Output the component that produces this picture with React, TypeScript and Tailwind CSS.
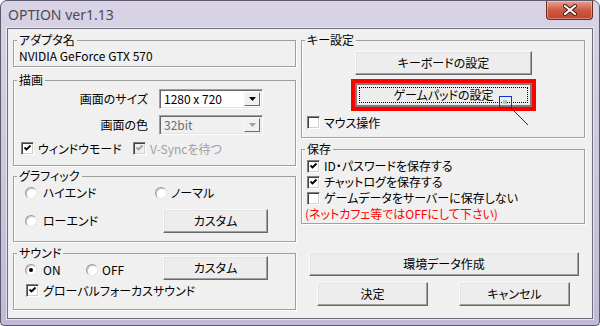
import React from 'react';

const font = "font-['Noto_Sans_CJK_JP','Noto_Sans',sans-serif] [font-feature-settings:'palt']";

function Group({ label, className = '', children }: { label: string; className?: string; children?: React.ReactNode }) {
  return (
    <fieldset className={`border border-[#a0a0a0] shadow-[inset_1px_0_0_#fff,1px_1px_0_#fff] min-w-0 ${className}`}>
      <legend className="ml-[3px] px-[2px] leading-[14px] bg-[#f0f0f0]">{label}</legend>
      {children}
    </fieldset>
  );
}

function Check({ checked = false, disabled = false }: { checked?: boolean; disabled?: boolean }) {
  return (
    <span
      className={`w-[13px] h-[13px] shrink-0 flex items-center justify-center border border-t-[#808080] border-l-[#808080] border-b-white border-r-white shadow-[inset_1px_1px_0_#404040,inset_-1px_-1px_0_#d4d0c8] ${
        disabled ? 'bg-[#f0f0f0]' : 'bg-white'
      }`}
    >
      {checked && (
        <svg width="9" height="9" viewBox="0 0 9 9">
          <path d="M1.5 3.5 L3.5 5.5 L7.5 1.5" fill="none" stroke={disabled ? '#a0a0a0' : '#000'} strokeWidth="1.8" />
        </svg>
      )}
    </span>
  );
}

function Radio({ on = false }: { on?: boolean }) {
  return (
    <span className="w-[12px] h-[12px] shrink-0 rounded-full flex items-center justify-center bg-white border border-t-[#9a9a9a] border-l-[#9a9a9a] border-b-[#e8e8e8] border-r-[#e8e8e8] shadow-[inset_1px_1px_0_#c8c8c8]">
      {on && <span className="w-[4px] h-[4px] rounded-full bg-black" />}
    </span>
  );
}

function Btn({ children, className = '' }: { children: React.ReactNode; className?: string }) {
  return (
    <div
      className={`h-[24px] shrink-0 flex items-center justify-center bg-[#ededed] border border-t-[#f8f8f8] border-l-[#f8f8f8] border-r-[#696969] border-b-[#696969] shadow-[inset_-1px_-1px_0_#a0a0a0,inset_1px_1px_0_#e3e3e3] leading-[14px] whitespace-nowrap ${className}`}
    >
      {children}
    </div>
  );
}

function Select({ value, disabled = false }: { value: string; disabled?: boolean }) {
  return (
    <div
      className={`w-[104px] h-[20px] flex items-center p-[2px] border border-t-[#a0a0a0] border-l-[#a0a0a0] border-r-white border-b-white shadow-[inset_1px_1px_0_#696969,inset_-1px_-1px_0_#e3e3e3] ${
        disabled ? 'bg-[#f0f0f0] text-[#6d6d6d]' : 'bg-white'
      }`}
    >
      <span className="flex-1 pl-[2px] leading-[14px]">{value}</span>
      <span className="w-[16px] h-[14px] flex items-center justify-center bg-[#f0f0f0] border border-t-[#f8f8f8] border-l-[#f8f8f8] border-r-[#696969] border-b-[#696969]">
        <svg width="7" height="4" viewBox="0 0 7 4">
          <path d="M0 0 H7 L3.5 4 Z" fill={disabled ? '#a0a0a0' : '#000'} />
        </svg>
      </span>
    </div>
  );
}

export default function App() {
  return (
    <div className={`relative w-[600px] h-[326px] overflow-hidden bg-white text-[12px] text-black whitespace-nowrap ${font}`}>
      <div className="w-[600px] h-[326px] flex flex-col border border-[#5c5a6e] rounded-t-[7px] rounded-b-[4px] bg-gradient-to-b from-[#d9d3e5] via-[#cec7de] to-[#c2b9d6]">
        {/* title bar */}
        <div className="h-[27px] flex justify-between items-start pr-[6px]">
          <span className="mt-[5px] ml-[7px] leading-[18px] text-[14px] text-[#4a4a55] font-['Noto_Sans',sans-serif]">
            OPTION ver1.13
          </span>
          <div className="w-[47px] h-[19px] flex items-center justify-center rounded-b-[4px] border border-t-0 border-[#6b2a22] bg-gradient-to-b from-[#e3a293] via-[#cf5a43] to-[#c4432c] shadow-[inset_0_0_0_1px_rgba(255,255,255,0.35)]">
            <svg width="14" height="12" viewBox="0 0 14 12">
              <path d="M2 2 L12 10 M12 2 L2 10" stroke="#3b1612" strokeWidth="4" strokeLinecap="square" />
              <path d="M2 2 L12 10 M12 2 L2 10" stroke="#fff" strokeWidth="2" strokeLinecap="square" />
            </svg>
          </div>
        </div>

        {/* client area */}
        <div className="w-[586px] h-[291px] mx-[6px] border border-[#6e6e7a] bg-[#f0f0f0] shadow-[0_0_0_1px_rgba(255,255,255,0.55)] flex gap-[5px] pl-[5px] pt-[4px]">
          {/* left column */}
          <div className="w-[283px] flex flex-col">
            <Group label="アダプタ名" className="h-[34px]">
              <div className="pl-[5px] pt-[2px] leading-[14px]">NVIDIA GeForce GTX 570</div>
            </Group>

            <Group label="描画" className="h-[93px] mt-[6px]">
              <div className="flex items-center mt-[2px]">
                <span className="w-[134px] text-right leading-[14px]">画面のサイズ</span>
                <div className="ml-[11px]">
                  <Select value="1280 x 720" />
                </div>
              </div>
              <div className="flex items-center mt-[6px]">
                <span className="w-[134px] text-right leading-[14px]">画面の色</span>
                <div className="ml-[11px]">
                  <Select value="32bit" disabled />
                </div>
              </div>
              <div className="flex items-center h-[15px] mt-[6px] pl-[7px]">
                <div className="w-[112px] flex items-center gap-[4px]">
                  <Check checked />
                  <span className="leading-[14px]">ウィンドウモード</span>
                </div>
                <div className="flex items-center gap-[4px]">
                  <Check checked disabled />
                  <span className="leading-[14px] text-[#a0a0a0]">V-Syncを待つ</span>
                </div>
              </div>
            </Group>

            <Group label="グラフィック" className="h-[73px] mt-[3px]">
              <div className="flex items-center h-[14px] mt-[3px] pl-[11px]">
                <div className="w-[130px] flex items-center gap-[6px]">
                  <Radio />
                  <span className="leading-[14px]">ハイエンド</span>
                </div>
                <div className="flex items-center gap-[4px]">
                  <Radio />
                  <span className="leading-[14px]">ノーマル</span>
                </div>
              </div>
              <div className="flex items-center mt-[9px] pl-[11px]">
                <div className="w-[138px] flex items-center gap-[6px]">
                  <Radio />
                  <span className="leading-[14px]">ローエンド</span>
                </div>
                <Btn className="w-[105px]">カスタム</Btn>
              </div>
            </Group>

            <Group label="サウンド" className="h-[64px] mt-[4px]">
              <div className="flex items-start -mt-[4px] pl-[11px]">
                <div className="w-[61px] h-[14px] mt-[7px] flex items-center gap-[6px]">
                  <Radio on />
                  <span className="leading-[14px]">ON</span>
                </div>
                <div className="w-[77px] h-[14px] mt-[7px] flex items-center gap-[4px]">
                  <Radio />
                  <span className="leading-[14px]">OFF</span>
                </div>
                <Btn className="w-[105px]">カスタム</Btn>
              </div>
              <div className="flex items-center h-[15px] mt-[3px] pl-[12px] gap-[4px]">
                <Check checked />
                <span className="leading-[14px]">グローバルフォーカスサウンド</span>
              </div>
            </Group>
          </div>

          {/* right column */}
          <div className="w-[284px] flex flex-col">
            <Group label="キー設定" className="h-[105px]">
              <Btn className="w-[177px] mt-[4px] ml-[53px]">キーボードの設定</Btn>
              <div className="w-[185px] h-[32px] mt-[4px] ml-[49px] border-4 border-[#ff0000]">
                <div className="w-full h-full p-[2px] bg-[#ededed] border-2 border-[#7c7c7c]">
                  <div className="w-full h-full flex items-center justify-center border border-dotted border-black leading-[14px]">
                    ゲームパッドの設定
                  </div>
                </div>
              </div>
              <div className="flex items-center h-[15px] mt-[4px] pl-[5px] gap-[4px]">
                <Check />
                <span className="leading-[14px]">マウス操作</span>
              </div>
            </Group>

            <Group label="保存" className="h-[82px] mt-[4px]">
              <div className="flex flex-col mt-[2px]">
                <div className="flex items-center h-[16px] pl-[5px] gap-[4px]">
                  <Check checked />
                  <span className="leading-[14px]">ID・パスワードを保存する</span>
                </div>
                <div className="flex items-center h-[16px] pl-[5px] gap-[4px]">
                  <Check checked />
                  <span className="leading-[14px]">チャットログを保存する</span>
                </div>
                <div className="flex items-center h-[16px] pl-[5px] gap-[4px]">
                  <Check />
                  <span className="leading-[14px]">ゲームデータをサーバーに保存しない</span>
                </div>
                <div className="flex items-center h-[16px] pl-[3px] text-[#ff0000] leading-[14px]">
                  (ネットカフェ等ではOFFにして下さい)
                </div>
              </div>
            </Group>

            <Btn className="w-[270px] mt-[28px] ml-[8px]">環境データ作成</Btn>
            <div className="flex mt-[6px] ml-[16px] gap-[31px]">
              <Btn className="w-[111px]">決定</Btn>
              <Btn className="w-[111px]">キャンセル</Btn>
            </div>
          </div>
        </div>
      </div>

      {/* pointer annotation */}
      <svg className="absolute left-[496px] top-[94px]" width="36" height="34" viewBox="0 0 36 34">
        <rect x="3.5" y="2.5" width="12" height="11" fill="none" stroke="#1030e0" strokeWidth="1" />
        <rect x="7" y="6" width="4" height="4" fill="#a8c8c8" />
        <path d="M15 14 L32 31" stroke="#1a2a80" strokeWidth="1" />
      </svg>
    </div>
  );
}
